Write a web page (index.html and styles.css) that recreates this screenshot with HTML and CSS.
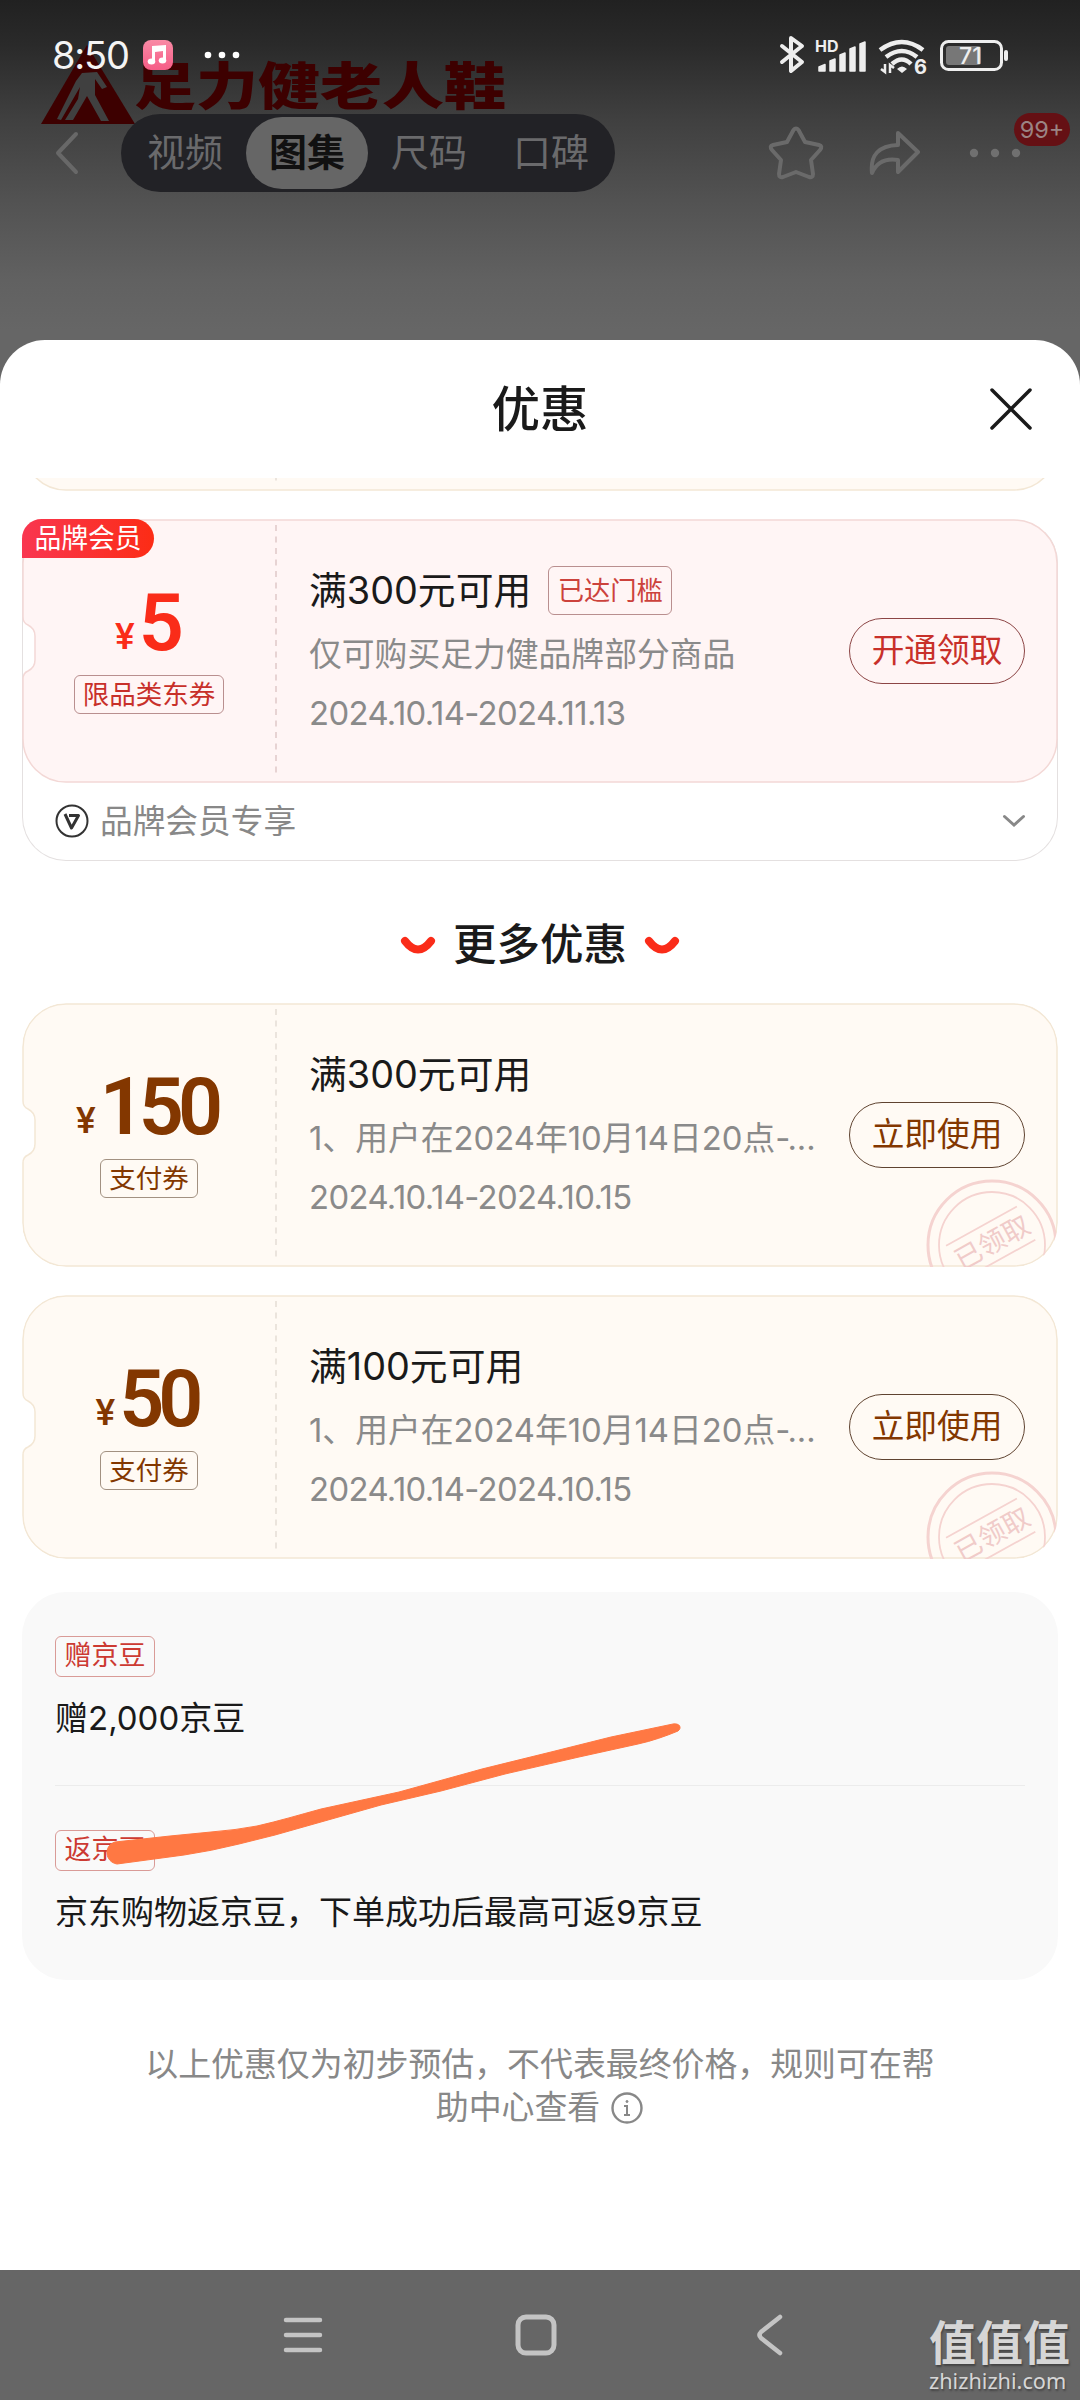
FILE: index.html
```html
<!DOCTYPE html>
<html lang="zh-CN">
<head>
<meta charset="utf-8">
<title>优惠</title>
<link rel="stylesheet" href="styles.css">
</head>
<body>
<svg class="defs" aria-hidden="true">
  <symbol id="ticket" viewBox="0 0 1036 264">
    <path d="M44 1H992A43 43 0 0 1 1035 44V220A43 43 0 0 1 992 263H44A43 43 0 0 1 1 220V160Q1 154 6 152C10 150 13 147 13 141V117C13 111 10 108 6 106Q1 104 1 98V44A43 43 0 0 1 44 1Z" fill="var(--paper)" stroke="var(--edge)" stroke-width="1.5"/>
    <path d="M254 6V258" stroke="var(--dash)" stroke-width="1.5" stroke-dasharray="6 5.5"/>
  </symbol>
  <symbol id="smile" viewBox="0 0 36 22"><path d="M5 6Q18 23 31 6" fill="none" stroke="#fa2c19" stroke-width="8" stroke-linecap="round"/></symbol>
</svg>

<div class="screen">
  <header class="hero">
    <div class="brand">
      <svg width="94" height="80" viewBox="0 0 94 80"><path d="M46 0L94 79H0Z" fill="#3d0000"/><path d="M41 28L35 36L16 74L20 75L39 42L37 54L24 75H32L46 51L60 76H68L54 50V34L61 44L66 42L56 27Z" fill="#404040"/></svg>
      <span class="brand-name">足力健老人鞋</span>
    </div>
    <div class="status">
      <span class="clock">8:50</span>
      <svg class="music" width="30" height="30" viewBox="0 0 30 30"><defs><linearGradient id="mg" x2="0" y2="1"><stop stop-color="#f98aa5"/><stop offset="1" stop-color="#f65c86"/></linearGradient></defs><rect width="30" height="30" rx="8" fill="url(#mg)"/><path d="M9 6L23 5V21H20V11L12 12V22H9Z" fill="#fff"/><ellipse cx="8.500" cy="21.500" rx="3.800" ry="3" fill="#fff"/><ellipse cx="19.500" cy="20.500" rx="3.800" ry="3" fill="#fff"/></svg>
      <svg class="notes" width="36" height="8" viewBox="0 0 36 8" fill="#fff"><circle cx="4" cy="4" r="3.300"/><circle cx="18" cy="4" r="3.300"/><circle cx="32" cy="4" r="3.300"/></svg>
      <svg class="signals" width="232" height="42" viewBox="0 0 232 42" fill="none" stroke="#eee">
        <path d="M3 13L23 29L12 38V5L23 13L3 29" stroke-width="4" stroke-linejoin="round" stroke-linecap="round"/>
        <text x="36" y="18.500" font-size="16" class="tiny">HD</text>
        <path d="M40 38V34L46 31.500V38ZM51 38V28L56 26V38ZM61 38V22L66 20V38ZM71 38V16L76 14V38ZM81 38V11L86 9V38Z" fill="#eee" stroke-width="1.500" stroke-linejoin="round"/>
        <path d="M101 17Q123 1 144 17M107 24Q123 12 138 24M113 31Q123 22 132 31" stroke-width="4.500"/>
        <path d="M118 36Q123 31 128 36L123 40Z" fill="#eee" stroke="none"/>
        <path d="M106 31V39L102 36M111 40V32L115 35" stroke-width="2.500"/>
        <text x="135" y="41" font-size="20" class="tiny">6</text>
        <rect x="162.500" y="8.500" width="60" height="28" rx="7" stroke-width="3"/>
        <rect x="167" y="13" width="35" height="19" rx="3" fill="#777" stroke="none"/>
        <path d="M227 19V26" stroke-width="4" stroke-linecap="round"/>
        <text x="180" y="30.500" font-size="23" class="level">71</text>
      </svg>
    </div>
    <nav class="topnav">
      <svg class="back" width="26" height="44" viewBox="0 0 26 44"><path d="M22 3L4 22L22 41" fill="none" stroke="#686868" stroke-width="4" stroke-linecap="round" stroke-linejoin="round"/></svg>
      <div class="tabs"><span class="tab">视频</span><span class="tab tab-on">图集</span><span class="tab">尺码</span><span class="tab">口碑</span></div>
      <svg class="star" width="56" height="56" viewBox="0 0 56 56"><path d="M25.500 5Q28 2 30.500 5L37 17L51 20Q55 21 52 25L43 35L45 49Q45 53 41 52L28 47L15 52Q11 53 11 49L13 35L4 25Q1 21 5 20L19 17Z" fill="none" stroke="#6a6a6a" stroke-width="4" stroke-linejoin="round"/></svg>
      <svg class="share" width="52" height="46" viewBox="0 0 52 46"><path d="M29 3L49 22L29 42V30Q10 27 3 43Q0 16 29 15Z" fill="none" stroke="#6a6a6a" stroke-width="4" stroke-linejoin="round"/></svg>
      <div class="more">
        <svg width="52" height="10" viewBox="0 0 52 10" fill="#707070"><circle cx="5" cy="5" r="4.200"/><circle cx="26" cy="5" r="4.200"/><circle cx="47" cy="5" r="4.200"/></svg>
        <span class="badge">99+</span>
      </div>
    </nav>
  </header>

  <main class="sheet">
    <div class="sheet-head">
      <h1>优惠</h1>
      <svg class="close" width="44" height="44" viewBox="0 0 44 44"><path d="M3 3L41 41M41 3L3 41" stroke="#1a1a1a" stroke-width="3.500" stroke-linecap="round"/></svg>
    </div>
    <div class="peek cream"><svg class="shape" viewBox="0 0 1036 264"><use href="#ticket"/></svg></div>

    <section class="member">
      <article class="coupon rose">
        <svg class="shape" viewBox="0 0 1036 264"><use href="#ticket"/></svg>
        <span class="ribbon">品牌会员</span>
        <div class="amount"><div class="price"><i>¥</i><b>5</b></div><span class="kind">限品类东券</span></div>
        <div class="info">
          <h2>满300元可用<span class="reach">已达门槛</span></h2>
          <p>仅可购买足力健品牌部分商品</p>
          <p class="date">2024.10.14-2024.11.13</p>
        </div>
        <span class="btn">开通领取</span>
      </article>
      <div class="member-row">
        <svg width="34" height="34" viewBox="0 0 34 34" fill="none" stroke="#333"><circle cx="17" cy="17" r="15.500" stroke-width="2"/><path d="M10 10L16.500 24L23.500 11.500H14" stroke-width="3" stroke-linejoin="round"/></svg>
        <span>品牌会员专享</span>
        <svg class="chev" width="24" height="14" viewBox="0 0 24 14"><path d="M2.500 2.500L12 11L21.500 2.500" fill="none" stroke="#888" stroke-width="3" stroke-linecap="round"/></svg>
      </div>
    </section>

    <div class="section-title"><svg width="36" height="22"><use href="#smile"/></svg><h2>更多优惠</h2><svg width="36" height="22"><use href="#smile"/></svg></div>

    <div class="list">
      <article class="coupon cream">
        <svg class="shape" viewBox="0 0 1036 264"><use href="#ticket"/></svg>
        <svg class="stamp" width="134" height="134" viewBox="0 0 134 134" fill="none" stroke="#f5d3d0"><circle cx="67" cy="67" r="64" stroke-width="3"/><circle cx="67" cy="67" r="53" stroke-width="1.800"/><g transform="rotate(-29 67 64)"><path d="M25 45H106M25 83H106" stroke-width="1.800"/><text x="67" y="74" text-anchor="middle">已领取</text></g></svg>
        <div class="amount"><div class="price"><i>¥</i><b>150</b></div><span class="kind">支付券</span></div>
        <div class="info">
          <h2>满300元可用</h2>
          <p>1、用户在2024年10月14日20点-<span class="dots">...</span></p>
          <p class="date">2024.10.14-2024.10.15</p>
        </div>
        <span class="btn">立即使用</span>
      </article>
      <article class="coupon cream">
        <svg class="shape" viewBox="0 0 1036 264"><use href="#ticket"/></svg>
        <svg class="stamp" width="134" height="134" viewBox="0 0 134 134" fill="none" stroke="#f5d3d0"><circle cx="67" cy="67" r="64" stroke-width="3"/><circle cx="67" cy="67" r="53" stroke-width="1.800"/><g transform="rotate(-29 67 64)"><path d="M25 45H106M25 83H106" stroke-width="1.800"/><text x="67" y="74" text-anchor="middle">已领取</text></g></svg>
        <div class="amount"><div class="price"><i>¥</i><b>50</b></div><span class="kind">支付券</span></div>
        <div class="info">
          <h2>满100元可用</h2>
          <p>1、用户在2024年10月14日20点-<span class="dots">...</span></p>
          <p class="date">2024.10.14-2024.10.15</p>
        </div>
        <span class="btn">立即使用</span>
      </article>
    </div>

    <section class="beans">
      <div class="bean"><span class="bean-tag">赠京豆</span><p>赠2,000京豆</p></div>
      <div class="bean"><span class="bean-tag">返京豆</span><p>京东购物返京豆，下单成功后最高可返9京豆</p></div>
      <svg class="mark" width="1036" height="388" viewBox="22 1592 1036 388"><path d="M115 1842L170 1836L211 1832Q236 1830 257 1826C279 1821 299 1815 321 1809L399 1792L482 1769L551 1752L611 1737L673 1724C680 1723 682 1728 678 1731C666 1736 652 1741 638 1744L579 1757L505 1774L441 1791L381 1805L275 1835L239 1844Q211 1851 184 1855L117 1864C105 1862 103 1846 115 1842Z" fill="#ff7843" stroke="#ff7843" stroke-linejoin="round"/></svg>
    </section>

    <p class="note">以上优惠仅为初步预估，不代表最终价格，规则可在帮<br><span class="note-end">助中心查看<svg width="34" height="34" viewBox="0 0 34 34" fill="none" stroke="#888"><circle cx="17" cy="17" r="14.500" stroke-width="2.400"/><path d="M14 15H17V24M14 24H20" stroke-width="2"/><circle cx="17" cy="10.500" r="1" fill="#888"/></svg></span></p>
  </main>

  <footer class="sysnav">
    <svg width="40" height="38" viewBox="0 0 40 38" stroke="#c4c4c4" stroke-width="4.500" stroke-linecap="round"><path d="M3 4H37M3 19H37M3 34H37"/></svg>
    <svg width="42" height="42" viewBox="0 0 42 42"><rect x="3" y="3" width="36" height="36" rx="8" fill="none" stroke="#c4c4c4" stroke-width="5"/></svg>
    <svg width="28" height="42" viewBox="0 0 28 42"><path d="M24 3L5 18Q2 21 5 24L24 39" fill="none" stroke="#c4c4c4" stroke-width="4.500" stroke-linecap="round"/></svg>
    <div class="site"><span class="site-name">值值值</span><span class="site-url">zhizhizhi.com</span></div>
  </footer>
</div>
</body>
</html>
```
FILE: styles.css
```css
* { box-sizing: border-box; }
body { margin: 0; }
h1, h2, p { margin: 0; font-weight: 400; }
svg { display: block; flex: none; }
.defs { position: absolute; width: 0; height: 0; }

.screen {
  position: relative;
  width: 1080px;
  height: 2400px;
  display: flex;
  flex-direction: column;
  overflow: hidden;
  background: #666;
  color: #1a1a1a;
  font-family: Inter, "Noto Sans CJK SC", sans-serif;
  white-space: nowrap;
}

/* dimmed page behind the sheet */
.hero {
  height: 340px;
  flex: none;
  background: linear-gradient(#212121 0, #2a2a2a 45px, #404040 120px, #535353 205px, #616161 280px, #666 330px);
}
.brand { position: absolute; left: 41px; top: 45px; display: flex; }
.brand-name {
  font: 900 62px/62px "Noto Sans CJK SC", sans-serif;
  color: #3d0000;
  transform: scaleY(.82);
  margin: 6px 0 0 -1px;
}
.status { position: relative; height: 114px; display: flex; align-items: flex-start; color: #f4f4f4; }
.clock { margin: 31px 0 0 52px; width: 91px; font-size: 38px; line-height: 48px; letter-spacing: -1.200px; }
.music { margin-top: 40px; }
.notes { margin: 51px 0 0 31px; }
.signals { margin: 33px 0 0 539px; overflow: visible; }
.tiny { fill: #eee; stroke: none; font-weight: 700; }
.level { fill: #eee; stroke: none; font-weight: 500; }

.topnav { position: relative; height: 78px; display: flex; align-items: center; }
.back { margin-left: 54px; }
.tabs {
  margin-left: 41px;
  width: 494px;
  height: 78px;
  padding: 3px;
  display: flex;
  border-radius: 39px;
  background: #222226;
  color: #6a6a6c;
  font-size: 38px;
  line-height: 71px;
}
.tab { width: 122px; text-align: center; }
.tab-on { background: #666; color: #111; border-radius: 36px; font-weight: 700; }
.star { margin-left: 153px; }
.share { margin-left: 45px; }
.more { position: relative; margin-left: 48px; }
.badge {
  position: absolute;
  left: 45px;
  top: -35px;
  width: 56px;
  height: 33px;
  border-radius: 17px;
  background: #651014;
  color: #9b8484;
  font-size: 23.500px;
  line-height: 34px;
  text-align: center;
}

.sheet {
  flex: 1;
  min-height: 0;
  background: #fff;
  border-radius: 45px 45px 0 0;
  padding: 0 22px;
}
.sheet-head { position: relative; height: 138px; display: flex; justify-content: center; }
.sheet-head h1 { font-size: 48.500px; line-height: 60px; margin-top: 40px; font-weight: 500; }
.close { position: absolute; right: 25px; top: 47px; }

.cream { --paper: #fffaf4; --edge: #f3e7d5; --dash: #e5ddd5; --ink: #833700; --line: #5f4330; --box: #a29181; }
.rose { --paper: #fff5f5; --edge: #f3d8d6; --dash: #dfc8c8; --ink: #c8302a; --line: #8c4545; --box: #b98f8f; }
.peek { height: 13px; display: flex; align-items: flex-end; overflow: hidden; }
.shape { width: 1036px; height: 264px; overflow: visible; }

.member {
  margin-top: 28px;
  height: 342px;
  border: 1.500px solid #e4e0e0;
  border-top-color: transparent;
  border-radius: 44px;
}
.coupon { position: relative; height: 264px; display: flex; overflow: hidden; border-radius: 44px; }
.coupon > .shape { position: absolute; left: 0; top: 0; }
.member .coupon { margin: -1px -1px 0; overflow: visible; }
.ribbon {
  position: absolute;
  left: 0;
  top: 0;
  width: 132px;
  height: 39px;
  border-radius: 20px 20px 20px 0;
  background: linear-gradient(90deg, #f93650, #fc2c15);
  color: #fff;
  font-size: 26.800px;
  line-height: 39px;
  text-align: center;
}
.amount { position: relative; width: 254px; display: flex; flex-direction: column; align-items: center; }
.price { height: 156px; width: 250px; padding: 57px 5px 0 0; display: flex; justify-content: center; align-items: baseline; color: var(--ink); }
.rose .price { color: #fa2c19; }
.price i { font: 500 37px/94px Roboto, sans-serif; margin-right: 4px; transform: translateY(-1px); }
.price b { font: 600 79px/94px Roboto, sans-serif; letter-spacing: -6px; }
.kind {
  height: 39px;
  padding: 0 8px;
  border: 1.500px solid var(--box);
  border-radius: 6px;
  font-size: 26.500px;
  line-height: 37px;
  color: var(--ink);
}
.info { position: relative; width: 573px; padding: 47px 0 0 33px; display: flex; flex-direction: column; }
.info h2 { display: flex; align-items: center; height: 48px; font-size: 37.800px; line-height: 46px; }
.reach {
  margin: 0 0 0 17px;
  width: 124px;
  height: 49px;
  border: 1.500px solid var(--box);
  border-radius: 6px;
  font-size: 26.300px;
  line-height: 47px;
  text-align: center;
  color: #cc423c;
}
.info p { height: 48px; margin-top: 16px; font-size: 32.800px; line-height: 48px; color: #8a8a8a; }
.info .date { margin-top: 11px; letter-spacing: -.6px; }
.dots { margin-left: -3px; }
.btn {
  position: relative;
  align-self: flex-start;
  margin-top: 99px;
  width: 176px;
  height: 66px;
  border: 1.500px solid var(--line);
  border-radius: 33px;
  font-size: 32.700px;
  line-height: 63px;
  text-align: center;
  color: var(--ink);
}
.stamp { position: absolute; left: 903px; top: 175px; }
.stamp text { font-size: 27px; fill: #f0cbc9; stroke: none; }

.member-row { height: 76px; padding: 0 31px 0 32px; display: flex; align-items: center; gap: 11px; font-size: 32.700px; line-height: 48px; color: #888; }
.chev { margin-left: auto; }

.section-title { height: 143px; margin-bottom: -1px; padding-top: 26px; display: flex; justify-content: center; align-items: center; gap: 17px; }
.section-title h2 { font-size: 43.500px; line-height: 60px; margin-top: -3px; font-weight: 500; }
.list { display: flex; flex-direction: column; gap: 28px; }

.beans { position: relative; margin-top: 33px; height: 388px; padding: 0 33px; border-radius: 44px; background: #f9f9f9; }
.bean { height: 193px; padding-top: 44px; }
.bean + .bean { border-top: 1.500px solid #ececec; }
.bean-tag {
  display: block;
  width: 100px;
  height: 41px;
  border: 1.500px solid #d99b97;
  border-radius: 6px;
  color: #cc3a32;
  font-size: 27px;
  line-height: 38px;
  text-align: center;
}
.bean p { margin-top: 17px; font-size: 33px; line-height: 48px; }
.mark { position: absolute; left: 0; top: 0; }

.note { margin-top: 63px; font-size: 32.900px; line-height: 43px; color: #888; text-align: center; }
.note-end { display: flex; justify-content: center; align-items: center; gap: 10px; height: 43px; }

.sysnav { position: relative; height: 130px; flex: none; display: flex; align-items: center; padding-left: 283px; background: #666; }
.sysnav > svg:nth-child(2) { margin-left: 192px; }
.sysnav > svg:nth-child(3) { margin-left: 199px; }
.site {
  margin: 36px 0 0 145px;
  width: 142px;
  display: flex;
  flex-direction: column;
  color: #d6d6d6;
  text-shadow: 1px 2px 2px #444;
}
.site-name { font: 700 47px/56px "Noto Sans CJK SC", sans-serif; }
.site-url { font: 21.700px/26px "Noto Sans", sans-serif; }
```
